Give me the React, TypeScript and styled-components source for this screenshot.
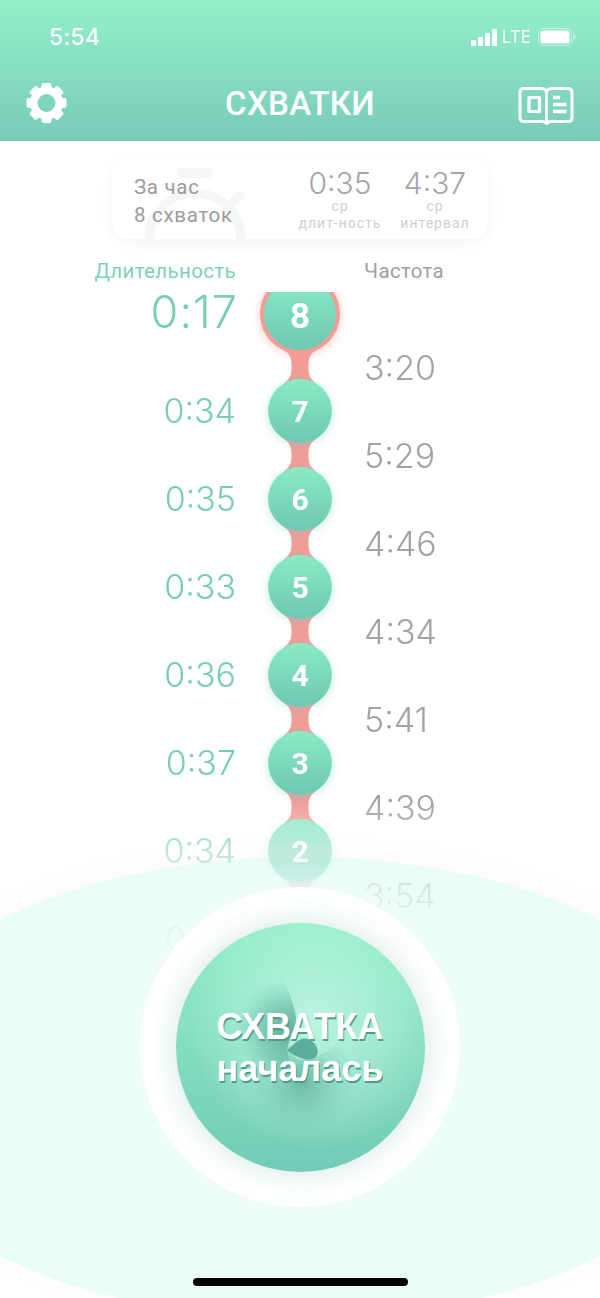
import React from "react";
import styled, { createGlobalStyle } from "styled-components";

const Global = createGlobalStyle`
  html, body { margin: 0; padding: 0; background: #fff; }
  body { font-family: Inter, "Noto Sans", sans-serif; }
`;

const Screen = styled.div`
  position: relative;
  width: 600px;
  height: 1298px;
  overflow: hidden;
  background: #fff;
  display: flex;
  flex-direction: column;
`;

const Header = styled.header`
  height: 141px;
  flex: none;
  background: linear-gradient(180deg, #93f0c9 0%, #79cbb9 100%);
  display: flex;
  flex-direction: column;
  color: #fff;
`;

const StatusBar = styled.div`
  height: 75px;
  padding: 21px 24px 0 49px;
  box-sizing: border-box;
  display: flex;
  align-items: flex-start;
  justify-content: space-between;
`;

const Clock = styled.span`
  font-size: 23px;
  line-height: 32px;
  font-weight: 500;
  letter-spacing: 0.2px;
  opacity: 0.95;
`;

const StatusIcons = styled.div`
  display: flex;
  align-items: center;
  gap: 5px;
  height: 32px;
`;

const Lte = styled.span`
  font-size: 17px;
  font-weight: 400;
  opacity: 0.9;
  margin-right: 2px;
`;

const NavBar = styled.div`
  display: grid;
  grid-template-columns: 1fr auto 1fr;
  align-items: center;
  padding: 0 26px;
  height: 56px;
`;

const NavEnd = styled.div`
  display: flex;
  justify-content: flex-end;
  padding-top: 5px;
`;

const Title = styled.h1`
  margin: 0;
  font-family: Roboto, sans-serif;
  font-size: 33px;
  font-weight: 500;
  letter-spacing: 0.3px;
`;

const Card = styled.section`
  position: relative;
  overflow: hidden;
  align-self: center;
  margin-top: 18px;
  width: 376px;
  height: 80px;
  flex: none;
  box-sizing: border-box;
  border-radius: 17px;
  background: #fff;
  box-shadow: 0 3px 18px rgba(0, 0, 0, 0.05);
  display: flex;
  align-items: center;
  padding: 0 14px 0 22px;
`;

const Watermark = styled.div`
  position: absolute;
  left: 28px;
  top: 8px;
  line-height: 0;
`;

const CardInfo = styled.div`
  position: relative;
  flex: 1;
  padding-top: 4px;
  font-size: 20.5px;
  line-height: 28px;
  color: #9b9b9b;
  font-family: Roboto, sans-serif;
  letter-spacing: 0.7px;
`;

const Stat = styled.div<{ $w: number; $gap?: number }>`
  position: relative;
  width: ${(p) => p.$w}px;
  margin-right: ${(p) => p.$gap ?? 0}px;
  padding-top: 1px;
  text-align: center;
  color: #cfcfcf;
  font-size: 14px;
  line-height: 17px;
  letter-spacing: 1px;
  font-family: Roboto, sans-serif;
`;

const StatValue = styled.div`
  font-family: Inter, sans-serif;
  font-size: 30px;
  font-weight: 300;
  line-height: 30px;
  letter-spacing: 0;
  color: #a6a6a6;
`;

const Labels = styled.div`
  flex: none;
  height: 41px;
  box-sizing: border-box;
  padding-top: 20px;
  display: grid;
  grid-template-columns: 236px 128px 1fr;
  align-items: start;
  font-family: Roboto, sans-serif;
  font-size: 20.5px;
  line-height: 24px;
  letter-spacing: 0.35px;
`;

const DurationLabel = styled.span`
  grid-column: 1;
  text-align: right;
  color: #7fd0b4;
  white-space: nowrap;
`;

const FrequencyLabel = styled.span`
  grid-column: 3;
  color: #a0a0a0;
`;

const fadeMask = `linear-gradient(180deg, #000 0, #000 520px, rgba(0,0,0,.5) 571px, rgba(0,0,0,.22) 615px, rgba(0,0,0,.1) 660px, transparent 700px)`;

const List = styled.div`
  position: relative;
  z-index: 1;
  flex: 1;
  min-height: 0;
  display: grid;
  grid-template-columns: 236px 128px 1fr;
  -webkit-mask-image: ${fadeMask};
  mask-image: ${fadeMask};
`;

const DurationColumn = styled.div`
  display: flex;
  flex-direction: column;
  align-items: flex-end;
  padding-top: 12px;
`;

const Duration = styled.div<{ $big?: boolean }>`
  height: ${(p) => (p.$big ? 75 : 88)}px;
  margin-right: ${(p) => (p.$big ? -2 : 0)}px;
  display: flex;
  align-items: ${(p) => (p.$big ? "flex-start" : "center")};
  font-size: ${(p) => (p.$big ? 45 : 34)}px;
  line-height: 40px;
  font-weight: 300;
  letter-spacing: ${(p) => (p.$big ? 1 : 0)}px;
  color: #78cfb0;
`;

const NodeTrack = styled.div`
  margin-top: 12px;
  overflow: hidden;
  height: 600px;
`;

const NodeColumn = styled.div`
  display: flex;
  flex-direction: column;
  align-items: center;
  margin-top: -18px;
`;

const Node = styled.div<{ $active?: boolean }>`
  position: relative;
  z-index: 1;
  flex: none;
  width: ${(p) => (p.$active ? 72 : 64)}px;
  height: ${(p) => (p.$active ? 72 : 64)}px;
  padding-top: ${(p) => (p.$active ? 4 : 0)}px;
  box-sizing: content-box;
  border: ${(p) => (p.$active ? "4px solid #f19d98" : "0")};
  border-radius: 50%;
  background: linear-gradient(180deg, #8aeac5 0%, #6fc8b2 100%);
  box-shadow: ${(p) =>
    p.$active ? "0 1px 10px rgba(241,157,152,.55)" : "0 2px 10px rgba(120,210,185,.4)"};
  display: flex;
  align-items: center;
  justify-content: center;
  color: #fff;
  font-family: Roboto, sans-serif;
  font-weight: 700;
  font-size: ${(p) => (p.$active ? 35 : 30)}px;
`;

const ActiveNode = styled(Node)`
  height: 68px;
`;

const Connector = styled.svg`
  flex: none;
  display: block;
  margin: -4px 0;
`;

const FrequencyColumn = styled.div`
  padding-top: 43px;
  display: flex;
  flex-direction: column;
`;

const Frequency = styled.div`
  height: 88px;
  display: flex;
  align-items: center;
  font-size: 34px;
  font-weight: 300;
  color: #a3a3a3;
`;

const Dock = styled.div`
  position: absolute;
  left: -137px;
  top: 857px;
  width: 874px;
  height: 462px;
  border-radius: 50%;
  background: #e9fdf8;
  box-shadow: 0 -4px 30px rgba(241, 157, 152, 0.07);
`;

const Ring = styled.div`
  position: absolute;
  z-index: 2;
  left: 140px;
  top: 887px;
  width: 320px;
  height: 320px;
  border-radius: 50%;
  background: #fff;
  box-shadow: 0 0 50px rgba(255, 255, 255, 0.55);
  display: flex;
  align-items: center;
  justify-content: center;
`;

const StartButton = styled.div`
  position: relative;
  overflow: hidden;
  width: 249px;
  height: 249px;
  border-radius: 50%;
  background:
    radial-gradient(circle at 56% 40%, rgba(205, 250, 235, 0.75) 0%, rgba(205, 250, 235, 0.35) 36%, rgba(205, 250, 235, 0) 62%),
    linear-gradient(180deg, #93efc9 0%, #74cbb6 100%);
  display: flex;
  flex-direction: column;
  align-items: center;
  justify-content: center;
  padding-top: 2px;
  box-sizing: border-box;
`;

const ButtonHalo = styled.div`
  border-radius: 50%;
  box-shadow: 0 0 30px rgba(110, 180, 165, 0.32);
`;

const Silhouette = styled.svg`
  position: absolute;
  inset: 0;
`;

const ButtonLine = styled.span`
  position: relative;
  color: #fff;
  font-family: "Liberation Sans", Arial, sans-serif;
  font-weight: 700;
  font-size: 36px;
  line-height: 42px;
  text-shadow: 1px 2px 0 #4f9c8a;
`;

const HomeBar = styled.div`
  position: absolute;
  z-index: 3;
  left: 193px;
  top: 1278px;
  width: 215px;
  height: 8px;
  border-radius: 4px;
  background: #000;
`;

const GearIcon = () => (
  <svg width="41" height="42" viewBox="0 0 41 42" style={{ display: "block" }}>
    {[0, 45, 90, 135, 180, 225, 270, 315].map((a) => (
      <rect key={a} x="15.5" y="1" width="10" height="9" rx="2" fill="#fff" transform={`rotate(${a} 20.5 21)`} />
    ))}
    <circle cx="20.5" cy="21" r="12.7" fill="none" stroke="#fff" strokeWidth="7.5" />
  </svg>
);

const BookIcon = () => (
  <svg width="56" height="40" viewBox="0 0 56 40" fill="none" stroke="#fff" strokeWidth="3" strokeLinejoin="round" strokeLinecap="round" style={{ display: "block" }}>
    <path d="M28.500 5C27 3.200 25 2.500 23 2.500H6C3.500 2.500 2 4 2 6.500V31.500C2 34 3.500 35.500 6 35.500H24C25.800 35.500 27.200 36.300 28.500 37.500C29.800 36.300 31.200 35.500 33 35.500H50C52.500 35.500 54 34 54 31.500V6.500C54 4 52.500 2.500 50 2.500H34C32 2.500 30 3.200 28.500 5Z" />
    <path d="M28.500 5V37" strokeWidth="2.500" />
    <rect x="11" y="11.500" width="10.500" height="14" strokeWidth="3.200" />
    <path d="M35 11.500H42M35 18.500H48.500M35 25.500H48.500" strokeWidth="3.400" strokeLinecap="butt" />
  </svg>
);

const SignalIcon = () => (
  <svg width="26" height="17" viewBox="0 0 26 17" fill="#fff">
    <rect x="0" y="11" width="5" height="6" rx="1" />
    <rect x="7" y="8" width="5" height="9" rx="1" />
    <rect x="14" y="4" width="5" height="13" rx="1" />
    <rect x="21" y="0" width="5" height="17" rx="1" />
  </svg>
);

const BatteryIcon = () => (
  <svg width="38" height="18" viewBox="0 0 38 18">
    <rect x="0.5" y="0.5" width="33" height="17" rx="4.500" fill="none" stroke="#fff" strokeOpacity=".5" />
    <rect x="2.500" y="2.500" width="29" height="13" rx="3" fill="#fff" />
    <path d="M35.500 6c1.400.4 2.200 1.600 2.200 3s-.8 2.600-2.200 3z" fill="#fff" fillOpacity=".5" />
  </svg>
);

const StopwatchMark = () => (
  <svg width="110" height="80" viewBox="0 0 110 80" fill="none" stroke="#f6f6f6" strokeWidth="9" strokeLinecap="round">
    <circle cx="55" cy="72" r="46" />
    <path d="M42 6h26" strokeWidth="10" />
    <path d="M88 38l12-9" />
  </svg>
);

const NeckShape = ({ height }: { height: number }) => (
  <Connector width="40" height={height} viewBox={`0 0 40 ${height}`}>
    <path
      d={`M4 0C10 4 11.500 8 11.500 ${height / 2}C11.500 ${height - 8} 10 ${height - 4} 4 ${height}H36C30 ${height - 4} 28.500 ${height - 8} 28.500 ${height / 2}C28.500 8 30 4 36 0Z`}
      fill="#f19d98"
    />
  </Connector>
);

const durations = ["0:34", "0:35", "0:33", "0:36", "0:37", "0:34", "0:35"];
const frequencies = ["3:20", "5:29", "4:46", "4:34", "5:41", "4:39", "3:54"];
const nodes = [7, 6, 5, 4, 3, 2, 1];

export default function App() {
  return (
    <Screen>
      <Global />
      <Header>
        <StatusBar>
          <Clock>5:54</Clock>
          <StatusIcons>
            <SignalIcon />
            <Lte>LTE</Lte>
            <BatteryIcon />
          </StatusIcons>
        </StatusBar>
        <NavBar>
          <GearIcon />
          <Title>СХВАТКИ</Title>
          <NavEnd>
            <BookIcon />
          </NavEnd>
        </NavBar>
      </Header>

      <Card>
        <Watermark>
          <StopwatchMark />
        </Watermark>
        <CardInfo>
          За час
          <br />8 схваток
        </CardInfo>
        <Stat $w={90} $gap={11}>
          <StatValue>0:35</StatValue>
          ср
          <br />
          длит-ность
        </Stat>
        <Stat $w={78}>
          <StatValue>4:37</StatValue>
          ср
          <br />
          интервал
        </Stat>
      </Card>

      <Labels>
        <DurationLabel>Длительность</DurationLabel>
        <FrequencyLabel>Частота</FrequencyLabel>
      </Labels>

      <Dock />

      <List>
        <DurationColumn>
          <Duration $big>0:17</Duration>
          {durations.map((d, i) => (
            <Duration key={i}>{d}</Duration>
          ))}
        </DurationColumn>
        <NodeTrack>
          <NodeColumn>
            <ActiveNode $active>8</ActiveNode>
            <NeckShape height={33} />
            {nodes.map((n) => (
              <React.Fragment key={n}>
                <Node>{n}</Node>
                <NeckShape height={32} />
              </React.Fragment>
            ))}
          </NodeColumn>
        </NodeTrack>
        <FrequencyColumn>
          {frequencies.map((f, i) => (
            <Frequency key={i}>{f}</Frequency>
          ))}
        </FrequencyColumn>
      </List>

      <Ring>
        <ButtonHalo>
          <StartButton>
            <Silhouette width="249" height="249" viewBox="0 0 249 249">
              <defs>
                <radialGradient id="upper" gradientUnits="userSpaceOnUse" cx="112" cy="108" r="52">
                  <stop offset="0" stopColor="#4f9f8c" stopOpacity=".85" />
                  <stop offset=".55" stopColor="#5fb09c" stopOpacity=".5" />
                  <stop offset="1" stopColor="#6fc8b2" stopOpacity="0" />
                </radialGradient>
                <radialGradient id="lower" gradientUnits="userSpaceOnUse" cx="126" cy="158" r="58">
                  <stop offset="0" stopColor="#4f9f8c" stopOpacity=".65" />
                  <stop offset=".5" stopColor="#62b4a0" stopOpacity=".32" />
                  <stop offset="1" stopColor="#7ad0ba" stopOpacity="0" />
                </radialGradient>
              </defs>
              <path
                fill="url(#upper)"
                d="M104 52C112 66 118 80 120 94C121 106 113 116 111 126L118 165L40 170L30 52Z"
              />
              <path
                fill="url(#lower)"
                d="M111 118L60 96L40 160L100 225L195 205C192 165 178 128 160 122C150 128 138 140 120 136Z"
              />
              <path
                d="M111 127C117 124 122 113 132 116C141 119 144 129 140 134C134 139 122 136 111 127Z"
                fill="#5aae9a"
              />
            </Silhouette>
            <ButtonLine>СХВАТКА</ButtonLine>
            <ButtonLine>началась</ButtonLine>
          </StartButton>
        </ButtonHalo>
      </Ring>
      <HomeBar />
    </Screen>
  );
}
